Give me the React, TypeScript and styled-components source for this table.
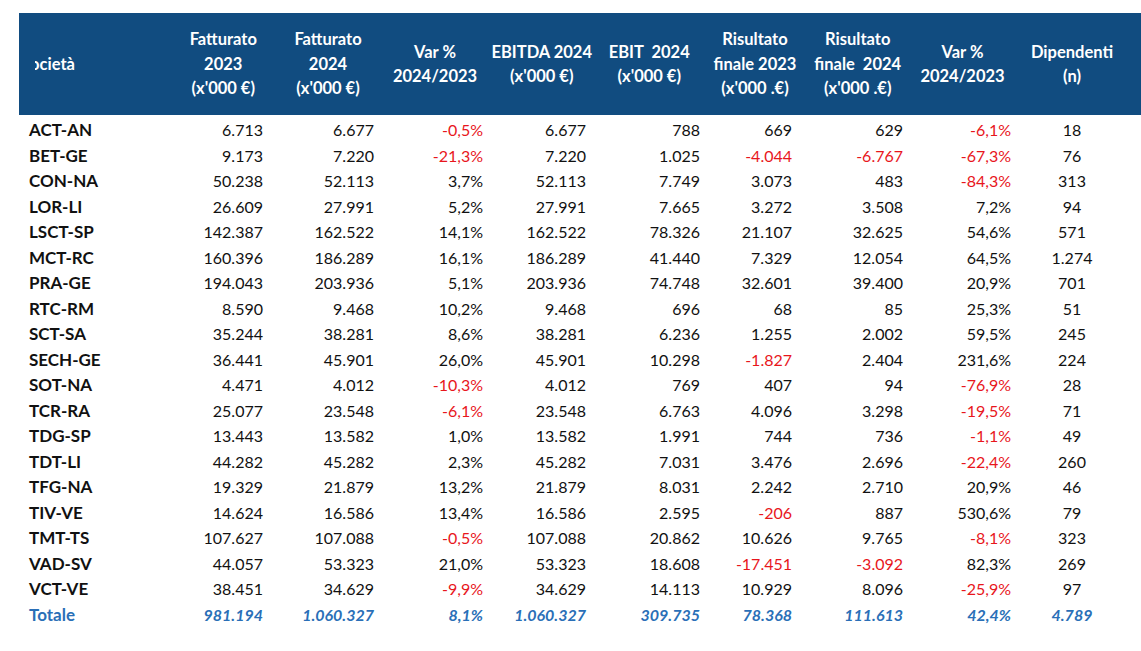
import { FC } from 'react'
import styled, { createGlobalStyle } from 'styled-components'

const Global = createGlobalStyle`
  html, body {
    margin: 0;
    background: #ffffff;
  }
  body {
    font-family: Lato, "Open Sans", "Liberation Sans", sans-serif;
    color: #111111;
  }
`

// column widths and right padding of the figures, measured off the sheet
const COLS = [
  { w: 153, pad: 0 },
  { w: 102.5, pad: 11.5 },
  { w: 107, pad: 7.5 },
  { w: 107, pad: 5.5 },
  { w: 106.5, pad: 9 },
  { w: 108.5, pad: 3.5 },
  { w: 103, pad: 14.5 },
  { w: 102.5, pad: 6 },
  { w: 107, pad: 5 },
  { w: 112, pad: 0 },
]
const template = COLS.map(c => `${c.w}px`).join(' ')

const HEADS: string[][] = [
  ['Fatturato', '2023', "(x'000 €)"],
  ['Fatturato', '2024', "(x'000 €)"],
  ['Var %', '2024/2023'],
  ['EBITDA 2024', "(x'000 €)"],
  ['EBIT\u00a0 2024', "(x'000 €)"],
  ['Risultato', 'finale 2023', "(x'000 .€)"],
  ['Risultato', 'finale\u00a0 2024', "(x'000 .€)"],
  ['Var %', '2024/2023'],
  ['Dipendenti', '(n)'],
]

const ROWS: string[][] = [
  ['ACT-AN', '6.713', '6.677', '-0,5%', '6.677', '788', '669', '629', '-6,1%', '18'],
  ['BET-GE', '9.173', '7.220', '-21,3%', '7.220', '1.025', '-4.044', '-6.767', '-67,3%', '76'],
  ['CON-NA', '50.238', '52.113', '3,7%', '52.113', '7.749', '3.073', '483', '-84,3%', '313'],
  ['LOR-LI', '26.609', '27.991', '5,2%', '27.991', '7.665', '3.272', '3.508', '7,2%', '94'],
  ['LSCT-SP', '142.387', '162.522', '14,1%', '162.522', '78.326', '21.107', '32.625', '54,6%', '571'],
  ['MCT-RC', '160.396', '186.289', '16,1%', '186.289', '41.440', '7.329', '12.054', '64,5%', '1.274'],
  ['PRA-GE', '194.043', '203.936', '5,1%', '203.936', '74.748', '32.601', '39.400', '20,9%', '701'],
  ['RTC-RM', '8.590', '9.468', '10,2%', '9.468', '696', '68', '85', '25,3%', '51'],
  ['SCT-SA', '35.244', '38.281', '8,6%', '38.281', '6.236', '1.255', '2.002', '59,5%', '245'],
  ['SECH-GE', '36.441', '45.901', '26,0%', '45.901', '10.298', '-1.827', '2.404', '231,6%', '224'],
  ['SOT-NA', '4.471', '4.012', '-10,3%', '4.012', '769', '407', '94', '-76,9%', '28'],
  ['TCR-RA', '25.077', '23.548', '-6,1%', '23.548', '6.763', '4.096', '3.298', '-19,5%', '71'],
  ['TDG-SP', '13.443', '13.582', '1,0%', '13.582', '1.991', '744', '736', '-1,1%', '49'],
  ['TDT-LI', '44.282', '45.282', '2,3%', '45.282', '7.031', '3.476', '2.696', '-22,4%', '260'],
  ['TFG-NA', '19.329', '21.879', '13,2%', '21.879', '8.031', '2.242', '2.710', '20,9%', '46'],
  ['TIV-VE', '14.624', '16.586', '13,4%', '16.586', '2.595', '-206', '887', '530,6%', '79'],
  ['TMT-TS', '107.627', '107.088', '-0,5%', '107.088', '20.862', '10.626', '9.765', '-8,1%', '323'],
  ['VAD-SV', '44.057', '53.323', '21,0%', '53.323', '18.608', '-17.451', '-3.092', '82,3%', '269'],
  ['VCT-VE', '38.451', '34.629', '-9,9%', '34.629', '14.113', '10.929', '8.096', '-25,9%', '97'],
]

const TOTAL = ['Totale', '981.194', '1.060.327', '8,1%', '1.060.327', '309.735', '78.368', '111.613', '42,4%', '4.789']

const Sheet = {
  Page: styled.div`
    padding: 13px 0 0 19px;
  `,
  Head: styled.div`
    display: grid;
    grid-template-columns: ${template};
    align-items: center;
    height: 102px;
    background: #114c80;
    color: #ffffff;
    font-weight: 700;
    font-size: 16.5px;
    line-height: 24.5px;
  `,
  HeadName: styled.div`
    padding-left: 16px;
  `,
  // the sheet cuts off the start of "Società"
  HeadClip: styled.div`
    overflow: hidden;
    white-space: nowrap;
  `,
  HeadNameText: styled.span`
    display: inline-block;
    margin-left: -14px;
  `,
  HeadCell: styled.div`
    text-align: center;
    white-space: nowrap;
  `,
  Body: styled.div`
    padding-top: 2px;
  `,
  Row: styled.div`
    display: grid;
    grid-template-columns: ${template};
    align-items: center;
    height: 25.5px;
    font-size: 16px;
  `,
}

type Tone = 'plain' | 'neg' | 'total'

const Name = styled.div<{ $tone: Tone }>`
  padding-left: 10px;
  font-weight: 700;
  font-size: 17px;
  color: ${p => (p.$tone === 'total' ? '#2a6fb7' : '#111111')};
  white-space: nowrap;
`

const Figure = styled.div<{ $tone: Tone; $pad: number; $center?: boolean }>`
  text-align: ${p => (p.$center ? 'center' : 'right')};
  padding-right: ${p => (p.$center ? 0 : p.$pad)}px;
  white-space: nowrap;
  color: ${p => (p.$tone === 'neg' ? '#e8161c' : p.$tone === 'total' ? '#2a6fb7' : '#111111')};
  font-weight: ${p => (p.$tone === 'total' ? 700 : 400)};
  font-style: ${p => (p.$tone === 'total' ? 'italic' : 'normal')};
`

const Line: FC<{ cells: string[]; total?: boolean }> = ({ cells, total = false }) => (
  <Sheet.Row>
    <Name $tone={total ? 'total' : 'plain'}>{cells[0]}</Name>
    {cells.slice(1).map((v, i) => (
      <Figure
        key={i}
        $pad={COLS[i + 1].pad}
        $center={i === 8}
        $tone={total ? 'total' : v.startsWith('-') ? 'neg' : 'plain'}
      >
        {v}
      </Figure>
    ))}
  </Sheet.Row>
)

const App: FC = () => {
  return (
    <>
      <Global />
      <Sheet.Page>
        <Sheet.Head>
          <Sheet.HeadName>
            <Sheet.HeadClip>
              <Sheet.HeadNameText>Società</Sheet.HeadNameText>
            </Sheet.HeadClip>
          </Sheet.HeadName>
          {HEADS.map((lines, i) => (
            <Sheet.HeadCell key={i}>
              {lines.map((l, j) => (
                <div key={j}>{l}</div>
              ))}
            </Sheet.HeadCell>
          ))}
        </Sheet.Head>
        <Sheet.Body>
          {ROWS.map(r => (
            <Line key={r[0]} cells={r} />
          ))}
          <Line cells={TOTAL} total />
        </Sheet.Body>
      </Sheet.Page>
    </>
  )
}

export default App
